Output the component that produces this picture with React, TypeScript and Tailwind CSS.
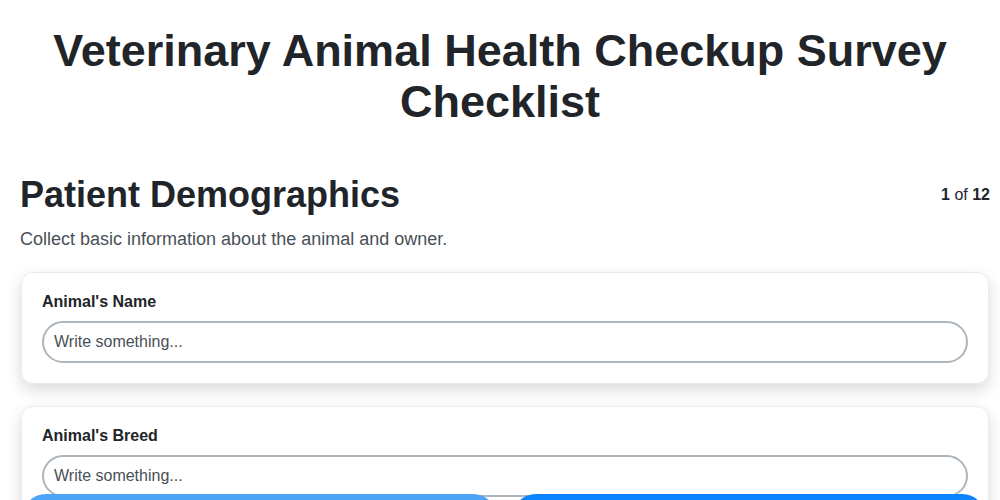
import React from "react";

function Field({ label }: { label: string }) {
  return (
    <div className="rounded-xl border border-[#e9ecef] bg-white px-[20px] pt-[19px] pb-[20px] shadow-[0_6px_16px_rgba(0,0,0,0.15)]">
      <label className="block text-[16px] font-bold leading-[20px] text-[#212529]">{label}</label>
      <input
        type="text"
        placeholder="Write something..."
        className="mt-[9px] block h-[42px] w-full rounded-full border-2 border-[#adb5bd] bg-white px-[10px] text-[16px] text-[#212529] placeholder:text-[#495057] outline-none"
      />
    </div>
  );
}

export default function App() {
  return (
    <div className="h-screen overflow-hidden bg-white text-[#212529]" style={{ fontFamily: '"Liberation Sans", Arial, sans-serif' }}>
      <div className="px-[20px] pt-[25px]">
        <h1 className="text-center text-[45px] font-bold leading-[51px] text-[#212529]">
          Veterinary Animal Health Checkup Survey Checklist
        </h1>
      </div>
      <div className="pl-[20px] pr-[10px]">
        <div className="mt-[47px] flex items-start justify-between">
          <h2 className="text-[36px] font-bold leading-[42px] text-[#212529]">Patient Demographics</h2>
          <div className="mt-[12px] text-[16px] leading-[18px] text-[#212529]">
            <span className="font-bold">1</span> of <span className="font-bold">12</span>
          </div>
        </div>
        <p className="mt-[12px] text-[18px] leading-[22px] text-[#495057]">
          Collect basic information about the animal and owner.
        </p>
        <div className="mt-[22px] flex flex-col gap-[22px] px-[1px]">
          <Field label="Animal's Name" />
          <Field label="Animal's Breed" />
          <Field label="Animal's Age" />
        </div>
      </div>
      <div className="fixed inset-x-0 top-[494px] flex gap-[15px] pl-[22px] pr-[14px]">
        <button aria-label="Previous" className="h-[48px] flex-1 rounded-[24px] bg-[#4da3f7]" />
        <button aria-label="Next" className="h-[48px] flex-1 rounded-[24px] bg-[#0a84ff]" />
      </div>
    </div>
  );
}
